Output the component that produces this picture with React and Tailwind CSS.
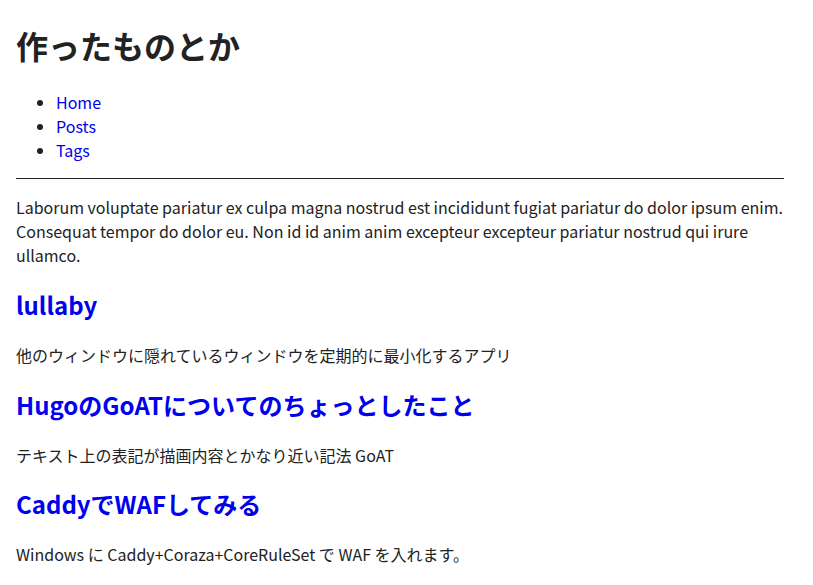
import React from "react";

const posts = [
  {
    title: "lullaby",
    summary: "他のウィンドウに隠れているウィンドウを定期的に最小化するアプリ",
  },
  {
    title: "HugoのGoATについてのちょっとしたこと",
    summary: "テキスト上の表記が描画内容とかなり近い記法 GoAT",
  },
  {
    title: "CaddyでWAFしてみる",
    summary: "Windows に Caddy+Coraza+CoreRuleSet で WAF を入れます。",
  },
];

const navLinks = ["Home", "Posts", "Tags"];

export default function App() {
  return (
    <div className="min-h-screen bg-white text-[#222] font-['Noto_Sans_CJK_JP','Noto_Sans',sans-serif] text-base leading-6">
      <div className="w-[768px] ml-4 flow-root">
        <h1 className="text-[32px] font-bold leading-[48px] mt-[21.44px] mb-[20.44px]">作ったものとか</h1>
        <ul className="list-disc pl-10 my-4">
          {navLinks.map((l) => (
            <li key={l}>
              <a href="#" className="text-[#0000ee]">
                {l}
              </a>
            </li>
          ))}
        </ul>
        <hr className="my-2 border-t border-[#222]" />
        <p className="my-4">
          Laborum voluptate pariatur ex culpa magna nostrud est incididunt fugiat pariatur do dolor ipsum enim.
          Consequat tempor do dolor eu. Non id id anim anim excepteur excepteur pariatur nostrud qui irure ullamco.
        </p>
        {posts.map((p) => (
          <section key={p.title}>
            <h2 className="text-2xl font-bold leading-9 my-[19.92px]">
              <a href="#" className="text-[#0000ee]">
                {p.title}
              </a>
            </h2>
            <p className="my-4">{p.summary}</p>
          </section>
        ))}
      </div>
    </div>
  );
}
